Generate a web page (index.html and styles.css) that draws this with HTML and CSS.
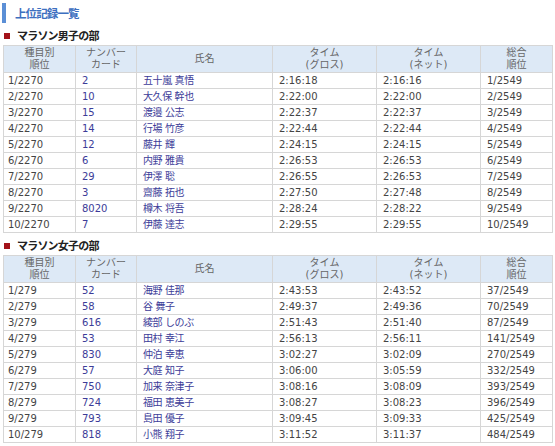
FILE: index.html
```html
<!DOCTYPE html>
<html lang="ja">
<head>
<meta charset="utf-8">
<link rel="stylesheet" href="styles.css">
</head>
<body>
<div class="page">
  <h1 class="title">上位記録一覧</h1>

  <h2 class="section"><span class="sq"></span>マラソン男子の部</h2>
  <table class="rank">
    <colgroup><col class="c1"><col class="c2"><col class="c3"><col class="c4"><col class="c5"><col class="c6"></colgroup>
    <thead>
      <tr><th>種目別<br>順位</th><th>ナンバー<br>カード</th><th>氏名</th><th>タイム<br>(グロス)</th><th>タイム<br>(ネット)</th><th>総合<br>順位</th></tr>
    </thead>
    <tbody>
      <tr><td>1/2270</td><td><a>2</a></td><td><a>五十嵐 真悟</a></td><td>2:16:18</td><td>2:16:16</td><td>1/2549</td></tr>
      <tr><td>2/2270</td><td><a>10</a></td><td><a>大久保 幹也</a></td><td>2:22:00</td><td>2:22:00</td><td>2/2549</td></tr>
      <tr><td>3/2270</td><td><a>15</a></td><td><a>渡邉 公志</a></td><td>2:22:37</td><td>2:22:37</td><td>3/2549</td></tr>
      <tr><td>4/2270</td><td><a>14</a></td><td><a>行場 竹彦</a></td><td>2:22:44</td><td>2:22:44</td><td>4/2549</td></tr>
      <tr><td>5/2270</td><td><a>12</a></td><td><a>藤井 輝</a></td><td>2:24:15</td><td>2:24:15</td><td>5/2549</td></tr>
      <tr><td>6/2270</td><td><a>6</a></td><td><a>内野 雅貴</a></td><td>2:26:53</td><td>2:26:53</td><td>6/2549</td></tr>
      <tr><td>7/2270</td><td><a>29</a></td><td><a>伊澤 聡</a></td><td>2:26:55</td><td>2:26:53</td><td>7/2549</td></tr>
      <tr><td>8/2270</td><td><a>3</a></td><td><a>齋藤 拓也</a></td><td>2:27:50</td><td>2:27:48</td><td>8/2549</td></tr>
      <tr><td>9/2270</td><td><a>8020</a></td><td><a>樽木 将吾</a></td><td>2:28:24</td><td>2:28:22</td><td>9/2549</td></tr>
      <tr><td>10/2270</td><td><a>7</a></td><td><a>伊藤 達志</a></td><td>2:29:55</td><td>2:29:55</td><td>10/2549</td></tr>
    </tbody>
  </table>

  <h2 class="section"><span class="sq"></span>マラソン女子の部</h2>
  <table class="rank">
    <colgroup><col class="c1"><col class="c2"><col class="c3"><col class="c4"><col class="c5"><col class="c6"></colgroup>
    <thead>
      <tr><th>種目別<br>順位</th><th>ナンバー<br>カード</th><th>氏名</th><th>タイム<br>(グロス)</th><th>タイム<br>(ネット)</th><th>総合<br>順位</th></tr>
    </thead>
    <tbody>
      <tr><td>1/279</td><td><a>52</a></td><td><a>海野 佳那</a></td><td>2:43:53</td><td>2:43:52</td><td>37/2549</td></tr>
      <tr><td>2/279</td><td><a>58</a></td><td><a>谷 舞子</a></td><td>2:49:37</td><td>2:49:36</td><td>70/2549</td></tr>
      <tr><td>3/279</td><td><a>616</a></td><td><a>綾部 しのぶ</a></td><td>2:51:43</td><td>2:51:40</td><td>87/2549</td></tr>
      <tr><td>4/279</td><td><a>53</a></td><td><a>田村 幸江</a></td><td>2:56:13</td><td>2:56:11</td><td>141/2549</td></tr>
      <tr><td>5/279</td><td><a>830</a></td><td><a>仲泊 幸恵</a></td><td>3:02:27</td><td>3:02:09</td><td>270/2549</td></tr>
      <tr><td>6/279</td><td><a>57</a></td><td><a>大庭 知子</a></td><td>3:06:00</td><td>3:05:59</td><td>332/2549</td></tr>
      <tr><td>7/279</td><td><a>750</a></td><td><a>加来 奈津子</a></td><td>3:08:16</td><td>3:08:09</td><td>393/2549</td></tr>
      <tr><td>8/279</td><td><a>724</a></td><td><a>福田 恵美子</a></td><td>3:08:27</td><td>3:08:23</td><td>396/2549</td></tr>
      <tr><td>9/279</td><td><a>793</a></td><td><a>島田 優子</a></td><td>3:09:45</td><td>3:09:33</td><td>425/2549</td></tr>
      <tr><td>10/279</td><td><a>818</a></td><td><a>小熊 翔子</a></td><td>3:11:52</td><td>3:11:37</td><td>484/2549</td></tr>
    </tbody>
  </table>
</div>
</body>
</html>
```
FILE: styles.css
```css
html, body {
  margin: 0;
  padding: 0;
  background: #fff;
}
body {
  font-family: "DejaVu Sans", Verdana, "Noto Sans CJK JP", sans-serif;
  font-size: 10px;
  color: #444;
}
.page {
  padding: 3px 3px 0 3px;
}
.title {
  margin: 0 0 0 -1px;
  height: 20px;
  border-left: 4px solid #5b8fd6;
  padding-left: 9px;
  font-family: "Noto Sans CJK JP", sans-serif;
  font-size: 11.5px;
  font-weight: bold;
  letter-spacing: -0.9px;
  line-height: 20px;
  color: #3d6fc0;
}
.section {
  display: flex;
  align-items: center;
  margin: 6px 0 3px 0;
  height: 13px;
  font-family: "Noto Sans CJK JP", sans-serif;
  font-size: 11px;
  font-weight: bold;
  line-height: 13px;
  color: #222;
  letter-spacing: -0.8px;
}
.sq {
  display: inline-block;
  width: 6px;
  height: 6px;
  background: #a3131a;
  margin: 0 7px 0 1px;
}
.rank {
  width: 549px;
  border-collapse: collapse;
  table-layout: fixed;
}
.c1 { width: 72px; }
.c2 { width: 61px; }
.c3 { width: 136px; }
.c4 { width: 104px; }
.c5 { width: 104px; }
.c6 { width: 72px; }
.rank th,
.rank td {
  border: 1px solid #d6d6d6;
}
.rank th {
  background: #dde9f6;
  color: #666;
  font-weight: normal;
  font-size: 10px;
  line-height: 12px;
  height: 26px;
  padding: 0;
  text-align: center;
  font-family: "DejaVu Sans", "Noto Sans CJK JP", sans-serif;
}
.rank td {
  height: 15px;
  padding: 0 0 0 4px;
  line-height: 15px;
  white-space: nowrap;
}
.rank td:nth-child(n+2) {
  padding-left: 6px;
}
.rank td:nth-child(3) a {
  letter-spacing: -0.4px;
}
.rank a {
  color: #3c3c98;
  text-decoration: none;
}
```
